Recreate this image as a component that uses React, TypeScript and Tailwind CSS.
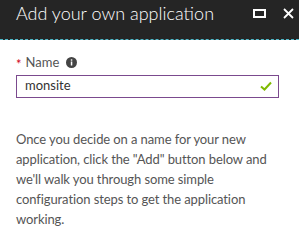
const App = () => {
  return (
    <div className="w-[299px] h-[244px] bg-white overflow-hidden font-['Lato',sans-serif]">
      <header className="h-10 bg-[#252525] flex items-start justify-between pl-4 pr-[5px] pt-[1px] border-b border-dashed border-[#4fb8c8]">
        <h1 className="text-white text-[18px] font-light leading-[24px]">
          Add your own application
        </h1>
        <div className="flex items-center gap-[17px] h-[24px]">
          <svg width="13" height="9" viewBox="0 0 13 9">
            <rect x="1" y="1" width="11" height="7" fill="none" stroke="white" strokeWidth="2" />
          </svg>
          <svg width="11" height="11" viewBox="0 0 11 11">
            <path d="M1 1 L10 10 M10 1 L1 10" stroke="white" strokeWidth="1.8" />
          </svg>
        </div>
      </header>
      <main className="px-4 pt-[13px]">
        <div className="flex items-center gap-1 text-[13px] text-[#555]">
          <span className="text-[#d0021b] text-[13px] leading-none mt-[3px]">*</span>
          <span>Name</span>
          <svg width="11" height="11" viewBox="0 0 11 11" className="ml-[3px]">
            <circle cx="5.5" cy="5.5" r="5.5" fill="#444" />
            <rect x="4.8" y="4.5" width="1.5" height="4" fill="white" />
            <rect x="4.8" y="2.3" width="1.5" height="1.4" fill="white" />
          </svg>
        </div>
        <div className="mt-[2px] w-[263px] h-[23px] border border-[#7b4a8e] flex items-center justify-between pl-2 pr-[6px]">
          <span className="text-[13px] text-[#333]">monsite</span>
          <svg width="12" height="10" viewBox="0 0 12 10">
            <path d="M1 5.5 L4.5 8.5 L11 1.5" fill="none" stroke="#7fba00" strokeWidth="2" />
          </svg>
        </div>
        <p className="mt-[31px] text-[13px] leading-[20px] tracking-[-0.1px] text-[#555]">
          Once you decide on a name for your new
          <br />
          application, click the "Add" button below and
          <br />
          we'll walk you through some simple
          <br />
          configuration steps to get the application
          <br />
          working.
        </p>
      </main>
    </div>
  );
};

export default App;
